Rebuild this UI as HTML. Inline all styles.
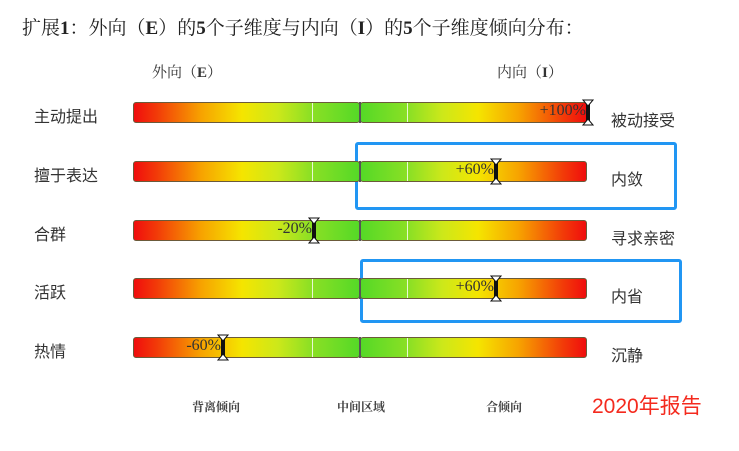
<!DOCTYPE html>
<html><head><meta charset="utf-8"><style>
body{margin:0;width:739px;height:451px;background:#fff;position:relative;overflow:hidden;font-family:"Liberation Serif","Noto Serif CJK SC",serif;color:#333}
.t{position:absolute;white-space:nowrap}
.lab{position:absolute;font-size:16px;color:#333;white-space:nowrap;font-family:"Liberation Sans","Noto Sans CJK SC",sans-serif}
.half{position:absolute;height:21px;border:1px solid #6b5a3a;border-radius:3px;box-sizing:border-box}
.L{left:133px;width:227px;background:linear-gradient(90deg,#f00d0d 0%,#f23a08 10%,#f7a300 30%,#f5e500 48%,#cce81a 64%,#8ee024 78%,#55d927 100%)}
.R{left:360px;width:227px;background:linear-gradient(270deg,#f00d0d 0%,#f23a08 10%,#f7a300 30%,#f5e500 48%,#cce81a 64%,#8ee024 78%,#55d927 100%)}
.gap{position:absolute;left:359px;width:2px;height:21px;background:#555}
.wl{position:absolute;width:1px;height:19px;background:rgba(255,255,255,.8)}
.mk{position:absolute;width:12px;height:27px}
.pct{position:absolute;font-size:16px;color:#333;text-align:right;width:70px}
.box{position:absolute;border:3px solid #2196f3;border-radius:3px;box-sizing:border-box}
.bl{position:absolute;font-size:12px;font-weight:bold;color:#444;font-family:"Liberation Serif","Noto Serif CJK SC",serif}
</style></head><body>
<div class="t" style="left:22px;top:13px;font-size:19px;color:#222">扩展<b>1</b>：外向（<b>E</b>）的<b>5</b>个子维度与内向（<b>I</b>）的<b>5</b>个子维度倾向分布：</div>
<div class="t" style="left:152px;top:61px;font-size:15px">外向（<b>E</b>）</div>
<div class="t" style="left:497px;top:61px;font-size:15px">内向（<b>I</b>）</div>

<div class="box" style="left:355px;top:142px;width:322px;height:68px"></div>
<div class="box" style="left:360px;top:259px;width:322px;height:64px"></div>

<div id="rows"></div>
<script>
var rows=[[102,"主动提出","被动接受",588,"+100%"],[161,"擅于表达","内敛",496,"+60%"],[220,"合群","寻求亲密",314,"-20%"],[278,"活跃","内省",496,"+60%"],[337,"热情","沉静",223,"-60%"]];
var h="";
rows.forEach(function(r){var y=r[0];
h+='<div class="lab" style="left:34px;top:'+(y+1)+'px">'+r[1]+'</div>';
h+='<div class="lab" style="left:611px;top:'+(y+5)+'px">'+r[2]+'</div>';
h+='<div class="half L" style="top:'+y+'px"></div><div class="half R" style="top:'+y+'px"></div>';
h+='<div class="gap" style="top:'+y+'px"></div>';
h+='<div class="wl" style="left:312px;top:'+(y+1)+'px"></div><div class="wl" style="left:407px;top:'+(y+1)+'px"></div>';
h+='<div class="pct" style="left:'+(r[3]-72)+'px;top:'+(y)+'px">'+r[4]+'</div>';
h+='<svg class="mk" style="left:'+(r[3]-6)+'px;top:'+(y-3)+'px" viewBox="0 0 12 27"><rect x="4" y="2" width="4" height="23" fill="#111"/><polygon points="1,1 11,1 6,7" fill="#fff" stroke="#111" stroke-width="1"/><polygon points="1,26 11,26 6,20" fill="#fff" stroke="#111" stroke-width="1"/></svg>';
});
document.getElementById("rows").innerHTML=h;
</script>

<div class="bl" style="left:192px;top:398px">背离倾向</div>
<div class="bl" style="left:337px;top:398px">中间区域</div>
<div class="bl" style="left:486px;top:398px">合倾向</div>
<div class="t" style="left:592px;top:390px;font-size:21px;color:#f42a1e;font-family:'Liberation Sans','Noto Sans CJK SC',sans-serif">2020年报告</div>
</body></html>
